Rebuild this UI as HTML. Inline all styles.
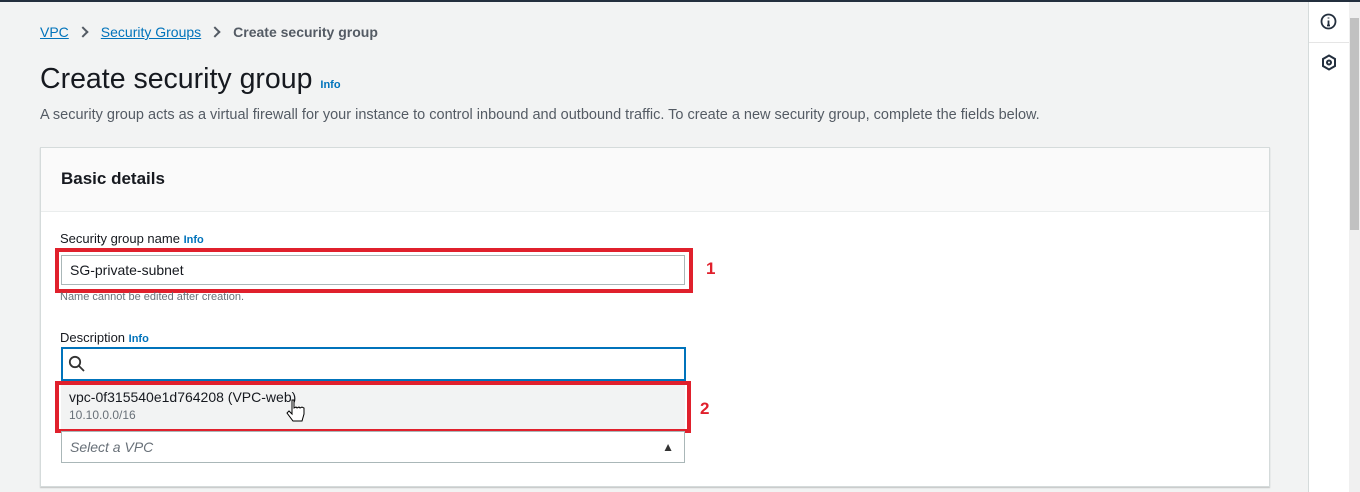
<!DOCTYPE html>
<html><head><style>
*{margin:0;padding:0;box-sizing:border-box}
body{width:1360px;height:492px;overflow:hidden;background:#f2f3f3;font-family:"Liberation Sans",sans-serif;color:#16191f;position:relative}
.a{position:absolute}
a{color:#0073bb;text-decoration:underline}
.info{color:#0073bb;font-weight:bold;font-size:11px}
.red{position:absolute;border:4px solid #e0202c}
.chev{display:inline-block;width:8px;height:8px;border-right:2px solid #545b64;border-top:2px solid #545b64;transform:rotate(45deg);margin:0 14px 1px 10px}
</style></head><body>
<div class="a" style="left:0;top:0;width:1360px;height:2px;background:#232f3e"></div>
<div class="a" style="left:40px;top:24px;font-size:14px;"><a>VPC</a><span class="chev"></span><a>Security Groups</a><span class="chev"></span><b style="color:#545b64">Create security group</b></div>
<div class="a" style="left:40px;top:63px;font-size:28.5px;">Create security group <span class="info">Info</span></div>
<div class="a" style="left:40px;top:107px;font-size:14.5px;color:#545b64">A security group acts as a virtual firewall for your instance to control inbound and outbound traffic. To create a new security group, complete the fields below.</div>
<div class="a" style="left:40px;top:147px;width:1230px;height:340px;background:#fff;border:1px solid #d5dbdb;box-shadow:0 1px 1px rgba(0,0,0,.2)">
 <div style="height:64px;background:#fafafa;border-bottom:1px solid #eaeded;padding:21px 20px;font-size:17px;font-weight:bold">Basic details</div>
</div>
<div class="a" style="left:60px;top:231px;font-size:13px">Security group name <span class="info">Info</span></div>
<div class="a" style="left:61px;top:255px;width:624px;height:30px;border:1px solid #aab7b8;background:#fff;padding:6px 8px;font-size:14px">SG-private-subnet</div>
<div class="red" style="left:55px;top:248px;width:638px;height:45px"></div>
<div class="a" style="left:706px;top:259px;font-size:17px;font-weight:bold;color:#e0202c">1</div>
<div class="a" style="left:60px;top:291px;font-size:11px;color:#687078">Name cannot be edited after creation.</div>
<div class="a" style="left:60px;top:330px;font-size:13px">Description <span class="info">Info</span></div>
<div class="a" style="left:61px;top:347px;width:625px;height:34px;border:2px solid #0073bb;background:#fff">
<svg width="18" height="18" style="position:absolute;left:5px;top:6px" viewBox="0 0 18 18" fill="none" stroke="#333" stroke-width="1.8"><circle cx="7" cy="7" r="5.2"/><path d="M11 11l5 5"/></svg></div>
<div class="a" style="left:61px;top:384px;width:624px;height:45px;background:#f2f3f3;padding:5px 8px"><div style="font-size:14px">vpc-0f315540e1d764208 (VPC-web)</div><div style="font-size:12px;color:#687078;margin-top:3px">10.10.0.0/16</div></div>
<svg class="a" style="left:286px;top:398px" width="20" height="26" viewBox="0 0 20 26"><path d="M6 2v14l-3-3-2 2 6 8h9l2-7v-6l-2-1-2 1-1-1-2 1-1-1-2 1V2z" fill="#fff" stroke="#000" stroke-width="1"/></svg>
<div class="red" style="left:55px;top:381px;width:636px;height:52px"></div>
<div class="a" style="left:700px;top:399px;font-size:17px;font-weight:bold;color:#e0202c">2</div>
<div class="a" style="left:61px;top:431px;width:624px;height:32px;border:1px solid #aab7b8;background:#fff;padding:7px 8px;font-size:14px;font-style:italic;color:#687078">Select a VPC<span style="position:absolute;right:10px;top:8px;font-style:normal;color:#333;font-size:12px">&#9650;</span></div>
<div class="a" style="left:1308px;top:2px;width:41px;height:490px;background:#fff;border-left:1px solid #d5dbdb"></div>
<div class="a" style="left:1309px;top:42px;width:40px;height:1px;background:#e5e5e5"></div>
<svg class="a" style="left:1320px;top:13px" width="17" height="17" viewBox="0 0 17 17" fill="none" stroke="#232f3e" stroke-width="1.8"><circle cx="8.5" cy="8.5" r="7"/><path d="M8.5 7.5v5M7 12.5h3M8.5 4.5v1"/></svg>
<svg class="a" style="left:1321px;top:54px" width="16" height="17" viewBox="0 0 16 17" fill="none" stroke="#232f3e" stroke-width="2"><path d="M8 1.5l6 3.5v7l-6 3.5-6-3.5v-7z"/><circle cx="8" cy="8.5" r="2"/></svg>
<div class="a" style="left:1349px;top:2px;width:11px;height:490px;background:#f0f0f0"></div>
<div class="a" style="left:1350px;top:18px;width:9px;height:212px;background:#c1c1c1"></div>
</body></html>
